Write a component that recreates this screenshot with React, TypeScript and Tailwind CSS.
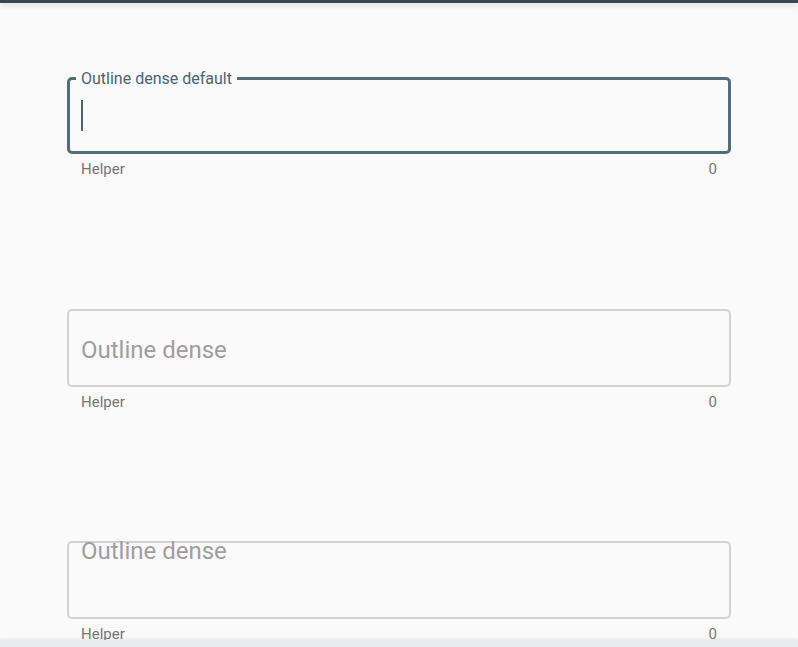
const font = { fontFamily: "Roboto, 'Liberation Sans', sans-serif" };

type FieldProps = {
  label: string;
  variant: "focused" | "empty" | "floating";
};

const Field = ({ label, variant }: FieldProps) => {
  const focused = variant === "focused";
  return (
    <div className="h-[232px]">
      <div
        className={
          focused
            ? "relative h-[77px] rounded-[5px] border-[3px] border-[#526d7b]"
            : "relative h-[78px] rounded-[5px] border-2 border-[#d2d2d2]"
        }
      >
        {focused && (
          <>
            <span className="absolute left-[6px] top-[-11px] bg-[#fafafa] px-[5px] text-[16px] leading-[20px] text-[#4b6572]">
              {label}
            </span>
            <span className="absolute left-[11px] top-[20px] h-[31px] w-[2px] bg-[#4b6572]" />
          </>
        )}
        {variant === "empty" && (
          <span className="absolute left-[12px] top-[27px] text-[24px] leading-[24px] text-[#9e9e9e]">
            {label}
          </span>
        )}
        {variant === "floating" && (
          <span className="absolute left-[12px] top-[-4px] text-[24px] leading-[24px] text-[#9e9e9e]">
            {label}
          </span>
        )}
      </div>
      <div className="mt-[6px] flex justify-between px-[14px] text-[15px] leading-[18px] text-[#757575]">
        <span>Helper</span>
        <span>0</span>
      </div>
    </div>
  );
};

export default function App() {
  return (
    <div className="relative h-[647px] w-full overflow-hidden bg-[#fafafa]" style={font}>
      <div className="h-[3px] bg-[#37474f] shadow-[0_2px_6px_rgba(0,0,0,0.18)]" />
      <div className="px-[67px] pt-[74px]">
        <Field label="Outline dense default" variant="focused" />
        <Field label="Outline dense" variant="empty" />
        <Field label="Outline dense" variant="floating" />
      </div>
      <div className="absolute bottom-0 left-0 right-0 h-[7px] bg-[#e9ebee] shadow-[0_-1px_3px_rgba(0,0,0,0.08)]" />
    </div>
  );
}
